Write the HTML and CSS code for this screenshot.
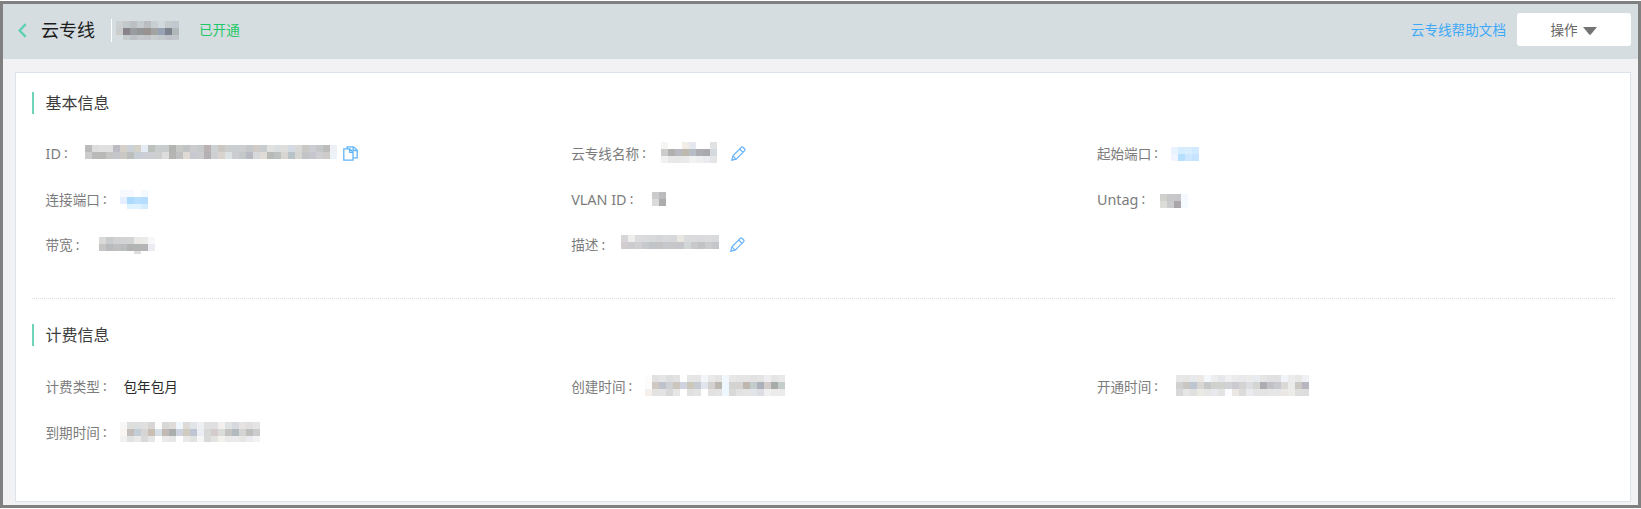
FILE: index.html
```
<!DOCTYPE html>
<html lang="zh-CN">
<head>
<meta charset="utf-8">
<title>云专线</title>
<link rel="stylesheet" href="styles.css">
</head>
<body>
<div class="frame">
  <header class="topbar">
    <svg class="back" width="9" height="15" viewBox="0 0 9 15"><path d="M7.7 1.2 1.6 7.5l6.1 6.3" fill="none" stroke="#5fd0b5" stroke-width="2.4"/></svg>
    <h1 class="title">云专线</h1>
    <span class="divider"></span>
    <svg class="mosaic m-title" data-rows="cdd0d0 c3c9cb bcc0c2 c5cbce bbbec1 c8cfd4 d2d9dd c5cacc c1c8cf|cbcdca 88838a 999c9e 939694 989391 a2a3a3 97a2b4 7d828e b1b8ba|d5dde0 c5cacc bdc1c5 c5c9cd c2c6c8 c8cdd0 c3c8cd bfc3c9 c2c6ca"></svg>
    <span class="status">已开通</span>
    <a class="help">云专线帮助文档</a>
    <button class="action">操作<svg width="14" height="8" viewBox="0 0 14 8"><path d="M0 0h14L7.8 7.4q-.8.8-1.6 0z" fill="#737373"/></svg></button>
  </header>
  <main class="card">
    <section class="section">
      <h2 class="heading">基本信息</h2>
      <div class="grid">
        <div class="item"><span class="label latin">ID</span><span class="colon">:</span><svg class="mosaic m-id" data-rows="bb dd e0 e0 bcbbc3 d5d0ca ccd0d8 d4d1c8 e5ebf4 bbc0bb cacdd0 c9cccd b2b4b2 c5c8c5 c0c4c4 cccccf c5c9ca b9b1b2 ccd1d4 cbc8c4 cbcfd0 cacdd2 cdced0 c5c8ca d1cbc8 c8cccf e1e2df d9dee0 dededc d4dae4 d8d8d6 cac8c5 cccdd2 c3c7c8 bcbcba edf1f7|cc b9bab7 b8b9b7 c5c5c3 c5c6cc cbc8c3 babfbd c6cdd4 cbced5 cdced3 cccfcd dddddd b5b6b3 bfc2c0 dfd9d3 c8c9d0 cbcbce b5b0b3 cecfd2 d8d3cd dce1e3 cccdd1 c5c8c8 b7bac3 d7d8da e0dbd7 b8bab8 bdc1c0 d8d4d0 b9c2c6 d6d5d1 c1c5c7 c6c7ce cfcfd3 cecbc9 edf1f8"></svg><svg class="copy" width="15" height="15" viewBox="0 0 15 15" fill="none" stroke="#62b5f8" stroke-width="1.3"><path d="M.8 2.9h6L10 6.1v8.1H.8zM6.6 3v3.3h3.3"/><path d="M4.2 2.7V.8h6.2l3.8 3.3v7.8H10M10.1.9v3.6h4"/></svg></div>
        <div class="item"><span class="label">云专线名称</span><span class="colon">:</span><svg class="mosaic m-name" data-rows="f5f5f2 - - f1ede7 e6e8ef - - e0e2e3|cc b1b0ae b7babe bdb9ae b6bdc4 acacb3 a9a8ad d3d9dc|f1 e8 e8 ea f2 ef eaecef e5"></svg><svg class="edit" width="15" height="15" viewBox="0 0 15 15"><use href="#pencil"/></svg></div>
        <div class="item"><span class="label">起始端口</span><span class="colon">:</span><svg class="mosaic m-start" data-rows="e9f2ff d6edff d8eeff d1eaff|f1f5ff b4dfff cde7ff c6e4ff"></svg></div>
        <div class="item"><span class="label">连接端口</span><span class="colon">:</span><svg class="mosaic m-link" data-rows="f6faff f6faff - f2f9ff|e6efff acd9fc b8dfff b6ddff|- dff2ff e0f2ff d5ecff"></svg></div>
        <div class="item"><span class="label latin">VLAN ID</span><span class="colon">:</span><svg class="mosaic m-vlan" data-rows="c9cbcc bbbabd|dadadb adabad"></svg></div>
        <div class="item"><span class="label latin">Untag</span><span class="colon">:</span><svg class="mosaic m-untag" data-rows="d0d1cd c8c8ca c7c6c8 f4f9ff|dcddd8 cbcbce a9a5a9 f5faff"></svg></div>
        <div class="item"><span class="label">带宽</span><span class="colon">:</span><svg class="mosaic m-band" data-rows="dad9d7 c9cccc d1d2d2 d1d3d4 d2d4d5 ebe9e6 ebebeb f8|c5c6c4 b8babd bfbfc1 babfbe b3b2b3 b1b6b5 b6b4b5 ecedf2|- - - - - dededc - -"></svg></div>
        <div class="item"><span class="label">描述</span><span class="colon">:</span><svg class="mosaic m-desc" data-rows="d7d5d7 eeefeb dcdcde d9dadb d8d9db d4d6da d7d9db d6d7d9 eae6e2 dadbdd dbdbde d9dadd dcdcde d9dadb|d1ccce ccccd0 d0d0d2 c7cacd c0c3c7 c4c4c5 c5c7cc c7c7c9 c4c6cb d2d6d7 c9c8cb c2c4c3 cacccd c5c6ca"></svg><svg class="edit" width="15" height="15" viewBox="0 0 15 15"><g id="pencil" fill="none" stroke="#69b3f8" stroke-width="1.2"><path d="m.8 14.2 1.1-4.4 8.5-8.5q.8-.7 1.6 0l1.7 1.7q.7.8 0 1.6l-8.5 8.5zM1.9 9.8l3.3 3.3M8.7 3l3.3 3.3"/></g></svg></div>
      </div>
    </section>
    <section class="section billing">
      <h2 class="heading">计费信息</h2>
      <div class="grid">
        <div class="item"><span class="label">计费类型</span><span class="colon">:</span><span class="value">包年包月</span></div>
        <div class="item"><span class="label">创建时间</span><span class="colon">:</span><svg class="mosaic m-created" data-rows="fc e1 e5 dddee0 e2 - e6 e5 f3f5f8 e9 e4 f2f7fb e7 e4 e5 e2 e4 eeedf2 e5 e9|fc d0c9c3 bfc1cc cfd1d4 ccc5bd cfd3df cbc7bb c6cad3 e1e5ec d3d1cf bdb7b2 ecf7ff d3d3d2 d4d3d1 c0b7b0 c1cccd aeb0bb d2ccca a7abaa c5cccc|f5f0ec e2 e3 d8 e6 - e0 e3 - e3e1df e3 edf7fd d9 e2 e4 e1e4e8 dcdee4 f0 ecebe9 eb"></svg></div>
        <div class="item"><span class="label">开通时间</span><span class="colon">:</span><svg class="mosaic m-opened" data-rows="e7 e6e6e4 e8e9ed ebe8e6 f4f7fb ed e6e7ed f0 eb e8e9ed ebebe9 e8ebef e5 e1 e0 f1f5fa ec e8 f0f1f5|d1 c9c5c1 bcc5d0 d8d7d6 c4c8c7 d0d1cf d0d2cd d0d1d5 cacad0 d4d3d1 dbdde0 d3d5d3 adacb0 c2c2c6 c8c9ce dad9d5 eaecea cbc8c4 b5b6bf|d8d8db e6 dfe0df ebe9e4 e6 e7e9ee e3 fafcff e9e6e4 db eaebef e5 e5e4e3 e6 e5e6e8 ebe8e5 eeece9 dddfdd dcdddc"></svg></div>
        <div class="item"><span class="label">到期时间</span><span class="colon">:</span><svg class="mosaic m-expire" data-rows="f7 dededc dcdfe0 dfe0df d7d6d4 fc d8d8d7 dedbd9 eff6fc dddad7 e1e5e8 eeeff3 e0 e0dfe1 f2efec dfe2e2 d6dade e6e4e2 e2dfe1 e4|faf5f2 c3beba c2cdd5 d6d5d4 c8beb4 d6dee6 c2b9b5 aaaead ced3df d0cabf bfc5d2 ebedf5 d7d7d5 d3cbcc dadcda c3c4c1 b3babf d4d4d4 bcbfbb cccccf|f1 dfe3e2 e9 d9 e6 - eae9eb e6 - e9 e1e2e2 f6 d9 e3 f3f1ec e9 ebebed e6e6e2 ecebef f3"></svg></div>
      </div>
    </section>
  </main>
</div>
<script src="mosaic.js"></script>
</body>
</html>
```
FILE: styles.css
```
* { box-sizing: border-box; }
body {
  margin: 0;
  padding: 1px 0;
  height: 509px;
  background: #fff;
  font-family: "Noto Sans", "Noto Sans CJK SC", sans-serif;
  font-size: 13.6px;
  color: #7c7c7c;
}
svg { display: block; flex: none; }
.frame {
  display: flex;
  flex-direction: column;
  height: 507px;
  border: 3px solid #808080;
  background: #f2f2f4;
}
.topbar {
  display: flex;
  flex: none;
  align-items: center;
  height: 55px;
  padding: 0 7px 4px 15px;
  background: #d5dde0;
}
.title {
  width: 70px;
  margin: 0 0 2px 14px;
  font-size: 18px;
  font-weight: 400;
  color: #1c1c1c;
}
.back { margin-top: 2px; }
.divider { width: 1px; height: 23px; margin-top: 2px; background: #fff; }
.status { margin: 0 0 2px 20px; color: #1fc866; }
.help { margin: 0 0 2px auto; color: #3ea9f8; }
.action {
  display: flex;
  align-items: center;
  justify-content: center;
  gap: 5px;
  width: 114px;
  height: 33px;
  margin-left: 11px;
  padding: 0 1px 2px 0;
  border: 0;
  border-radius: 3px;
  background: #fff;
  font: inherit;
  color: #666;
}
.action svg { margin-top: 5px; }
.card {
  flex: 1;
  min-height: 0;
  margin: 13px 7px 3px 12px;
  padding: 19px 15px 0 16px;
  border: 1px solid #dde3ea;
  background: #fff;
}
.section { height: 206px; }
.billing { height: auto; padding-top: 25px; border-top: 1px dotted #d8dce0; }
.heading {
  height: 22px;
  margin: 0 0 16px;
  padding-left: 11.5px;
  border-left: 2px solid #6fd3b9;
  font-size: 16px;
  font-weight: 400;
  line-height: 22px;
  color: #3c3c3c;
}
.billing .heading { margin-bottom: 17px; }
.grid {
  display: grid;
  grid-template-columns: repeat(3, 525.7px);
  grid-auto-rows: 45.7px;
  padding-left: 13.5px;
}
.item { display: flex; align-items: center; white-space: nowrap; }
.latin { margin-top: 2px; font-size: 14.4px; }
.colon { width: 13.6px; padding-left: 3px; }
.value { margin-left: 10px; color: #2a2a2a; }
.m-title { height: 19px; margin: 1px 0 0 4px; }
.m-id { margin: 0 0 2px 11px; }
.m-name { margin: 0 0 1px 8px; }
.m-start { margin: 2px 0 0 6px; }
.m-link { height: 19px; margin: 1px 0 0 7px; }
.m-vlan { margin-left: 12px; }
.m-untag { margin: 4px 0 0 8px; }
.m-band { height: 17px; margin: 2px 0 0 13px; }
.m-desc { margin: 0 0 5px 9px; }
.m-created { margin-left: 6px; }
.m-opened { margin-left: 11px; }
.m-expire { height: 20px; margin: 1px 0 0 7px; }
.copy { margin: 1px 0 0 6px; }
.m-name + .edit { margin: 1px 0 0 14px; }
.m-desc + .edit { margin-left: 11px; }
```
FILE: mosaic.js
```
// Draws each masked value as rows of 7px cells; two-digit entries are greys.
const CELL = 7;
document.querySelectorAll('.mosaic').forEach((svg) => {
  const rows = svg.dataset.rows.split('|').map((row) => row.split(' '));
  svg.setAttribute('width', rows[0].length * CELL);
  svg.setAttribute('height', rows.length * CELL);
  svg.setAttribute('shape-rendering', 'crispEdges');
  rows.forEach((row, y) => row.forEach((code, x) => {
    if (code === '-') return;
    const cell = document.createElementNS('http://www.w3.org/2000/svg', 'rect');
    cell.setAttribute('x', x * CELL);
    cell.setAttribute('y', y * CELL);
    cell.setAttribute('width', CELL);
    cell.setAttribute('height', CELL);
    cell.setAttribute('fill', '#' + (code.length === 2 ? code.repeat(3) : code));
    svg.appendChild(cell);
  }));
});
```
